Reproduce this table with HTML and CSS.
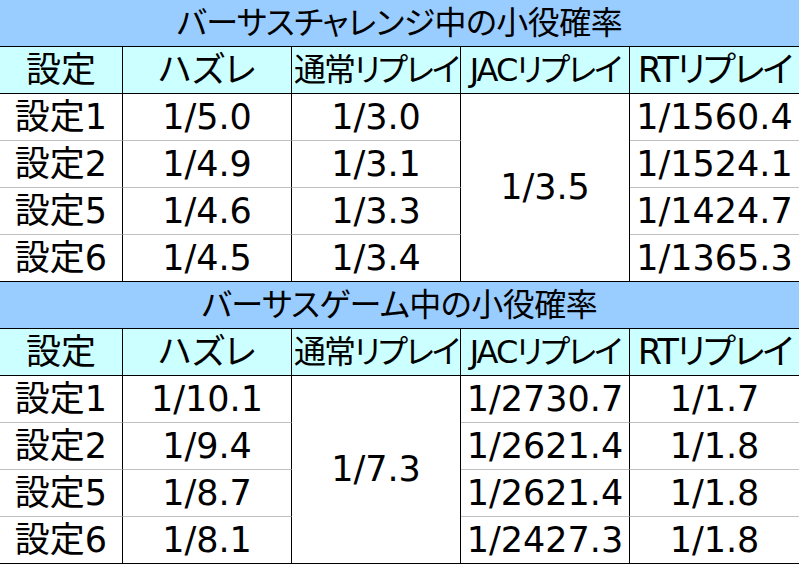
FILE: index.html
```html
<!DOCTYPE html>
<html lang="ja">
<head>
<meta charset="utf-8">
<title>小役確率</title>
<link rel="stylesheet" href="styles.css">
</head>
<body>
<section class="sheet">
  <div class="cell title">バーサスチャレンジ中の小役確率</div>
  <div class="cell head">設定</div>
  <div class="cell head">ハズレ</div>
  <div class="cell head tight">通常リプレイ</div>
  <div class="cell head tight">JACリプレイ</div>
  <div class="cell head last rt">RTリプレイ</div>

  <div class="cell">設定1</div>
  <div class="cell">1/5.0</div>
  <div class="cell">1/3.0</div>
  <div class="cell merged col4">1/3.5</div>
  <div class="cell last">1/1560.4</div>

  <div class="cell">設定2</div>
  <div class="cell">1/4.9</div>
  <div class="cell">1/3.1</div>
  <div class="cell last">1/1524.1</div>

  <div class="cell">設定5</div>
  <div class="cell">1/4.6</div>
  <div class="cell">1/3.3</div>
  <div class="cell last">1/1424.7</div>

  <div class="cell end">設定6</div>
  <div class="cell end">1/4.5</div>
  <div class="cell end">1/3.4</div>
  <div class="cell end last">1/1365.3</div>
</section>
<section class="sheet">
  <div class="cell title">バーサスゲーム中の小役確率</div>
  <div class="cell head">設定</div>
  <div class="cell head">ハズレ</div>
  <div class="cell head tight">通常リプレイ</div>
  <div class="cell head tight">JACリプレイ</div>
  <div class="cell head last rt">RTリプレイ</div>

  <div class="cell">設定1</div>
  <div class="cell">1/10.1</div>
  <div class="cell merged col3">1/7.3</div>
  <div class="cell">1/2730.7</div>
  <div class="cell last">1/1.7</div>

  <div class="cell">設定2</div>
  <div class="cell">1/9.4</div>
  <div class="cell">1/2621.4</div>
  <div class="cell last">1/1.8</div>

  <div class="cell">設定5</div>
  <div class="cell">1/8.7</div>
  <div class="cell">1/2621.4</div>
  <div class="cell last">1/1.8</div>

  <div class="cell end">設定6</div>
  <div class="cell end">1/8.1</div>
  <div class="cell end">1/2427.3</div>
  <div class="cell end last">1/1.8</div>
</section>
</body>
</html>
```
FILE: styles.css
```css
html, body {
  margin: 0;
  padding: 0;
  background: #ffffff;
}

body {
  width: 799px;
  font-family: "DejaVu Sans", "Noto Sans CJK JP", sans-serif;
  font-size: 35px;
  color: #000000;
  font-feature-settings: "palt";
}

.sheet {
  display: grid;
  grid-template-columns: 123px 169px 169px 169px 169px;
  grid-auto-rows: 47px;
}

.cell {
  box-sizing: border-box;
  display: flex;
  align-items: center;
  justify-content: center;
  white-space: nowrap;
  line-height: 1;
  border-right: 1px solid #000000;
  border-bottom: 1px solid #c0c0c0;
  background: #ffffff;
  overflow: hidden;
}

.cell.last {
  border-right: none;
}

.cell.end,
.cell.merged {
  border-bottom: 1px solid #000000;
}

.title {
  grid-column: 1 / span 5;
  background: #99ccff;
  border-right: none;
  border-bottom: 1px solid #000000;
  font-size: 32px;
  letter-spacing: -0.5px;
}

.head {
  background: #ccffff;
  border-bottom: 1px solid #000000;
}

.tight {
  font-size: 32px;
  letter-spacing: -2px;
}

.rt {
  letter-spacing: -2px;
}

.merged {
  grid-row: 3 / span 4;
}

.col3 {
  grid-column: 3;
}

.col4 {
  grid-column: 4;
}
```
